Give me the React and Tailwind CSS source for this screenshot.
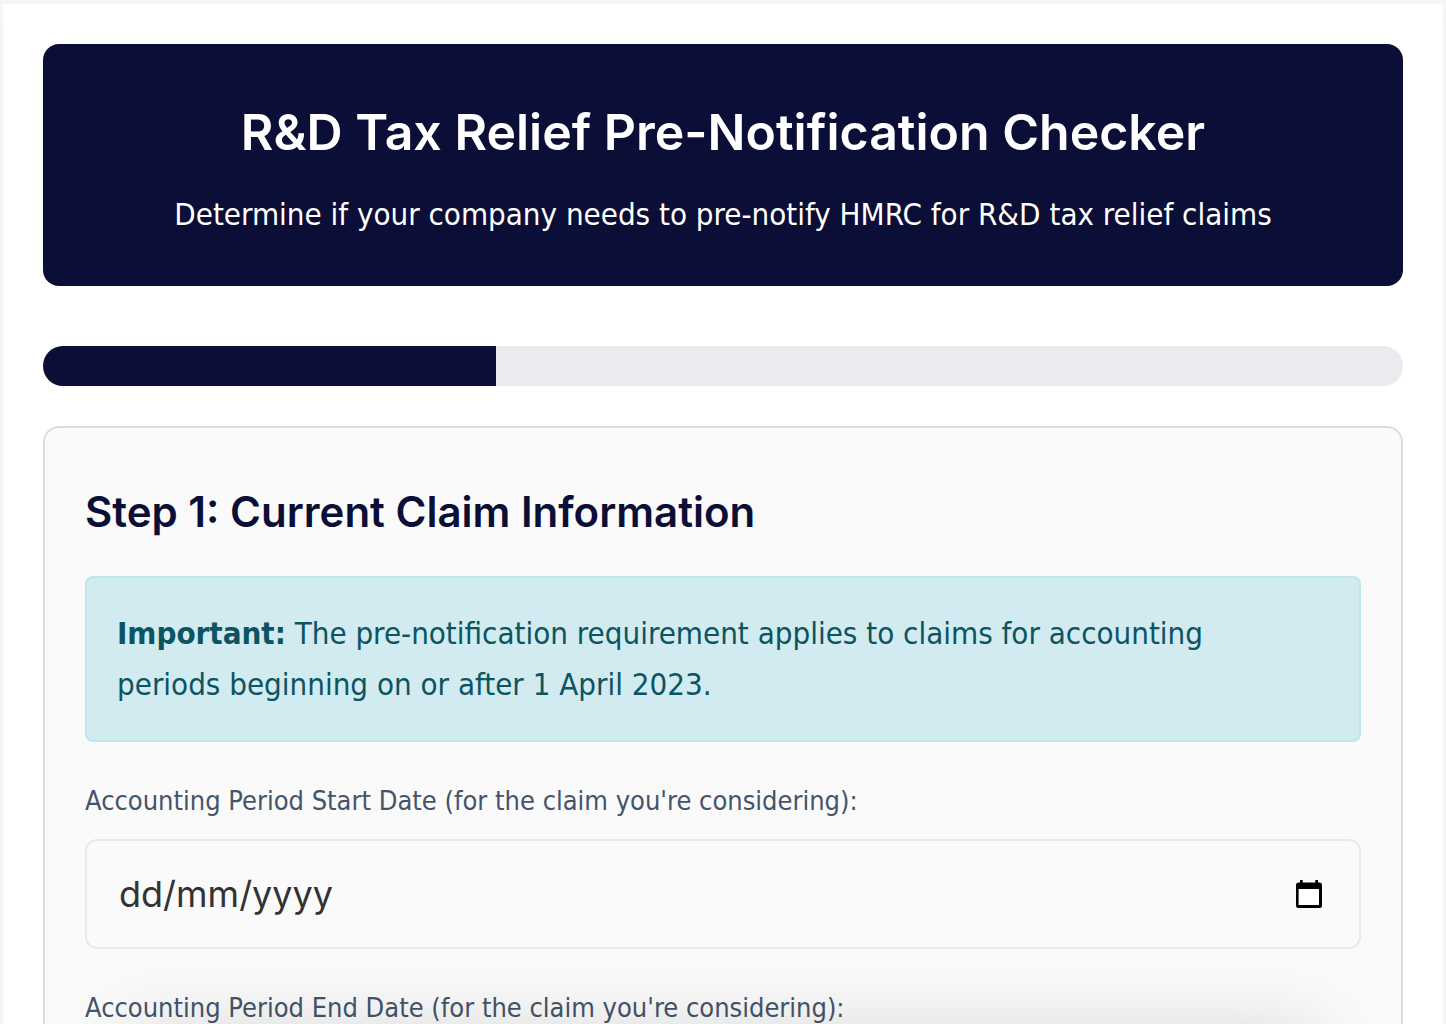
import { useState } from "react"

const STEPS = 3

const dateFields = [
    { id: "period-start", label: "Accounting Period Start Date (for the claim you're considering):" },
    { id: "period-end", label: "Accounting Period End Date (for the claim you're considering):" },
]

const CalendarIcon = () => (
    <svg viewBox="0 0 26 28" className="w-[26px] h-7" aria-hidden="true">
        <path d="M4 0h2.700v2.500h12.600V0H22v2.500h1.500A2.500 2.500 0 0 1 26 5v20.500a2.500 2.500 0 0 1-2.500 2.500h-21A2.500 2.500 0 0 1 0 25.500V5A2.500 2.500 0 0 1 2.500 2.500H4z" fill="#000" />
        <path d="M2.600 9h20.400v16H2.600z" fill="#fff" />
    </svg>
)

const DateField = ({ id, label, value, onChange }) => (
    <div className="mt-9">
        <label htmlFor={id} className="block mb-4 text-[27px] leading-[45px] text-[#44546a]">
            {label}
        </label>
        <div className="flex items-center h-[110px] pl-8 pr-[37px] border-2 border-[#e9e9e9] rounded-xl">
            <input
                id={id}
                type="text"
                placeholder="dd/mm/yyyy"
                value={value}
                onChange={(e) => onChange(id, e.target.value)}
                className="flex-1 min-w-0 bg-transparent outline-none font-['Inter',sans-serif] text-[36px] text-[#333333] placeholder:text-[#333333]"
            />
            <button type="button" aria-label="Choose date">
                <CalendarIcon />
            </button>
        </div>
    </div>
)

export default function App() {
    const [step] = useState(1)
    const [dates, setDates] = useState({ "period-start": "", "period-end": "" })

    const handleDateChange = (id, value) => {
        setDates({ ...dates, [id]: value })
    }

    return (
        <div className="min-h-screen bg-[#f8f8f8] px-[3px] pt-1 font-['DejaVu_Sans_Condensed','Noto_Sans',sans-serif]">
            <main className="bg-white p-10 shadow-[0_0_20px_rgba(0,0,0,0.04)]">
                <header className="px-10 pt-[50px] pb-[46px] rounded-2xl bg-[#0b0e36] text-white text-center">
                    <h1 className="font-['Inter',sans-serif] font-semibold text-[50px] leading-[76px]">
                        R&amp;D Tax Relief Pre-Notification Checker
                    </h1>
                    <p className="mt-[19px] text-[31px] leading-[51px]">
                        Determine if your company needs to pre-notify HMRC for R&amp;D tax relief claims
                    </p>
                </header>

                {/* Progress bar */}
                <div className="mt-[60px] h-10 rounded-full bg-[#eaebef] overflow-hidden">
                    <div className="h-full bg-[#0b0e36]" style={{ width: `${(step / STEPS) * 100}%` }} />
                </div>

                <section className="mt-10 p-10 border-2 border-[#dcdddd] rounded-2xl bg-[#fafafa]">
                    <h2 className="mt-3 font-['Inter',sans-serif] font-semibold text-[42px] leading-[64px] text-[#0b0e36]">
                        Step 1: Current Claim Information
                    </h2>
                    <p className="mt-8 py-[30px] pl-[30px] pr-16 border-2 border-[#bee5eb] rounded-lg bg-[#d1ebf0] text-[31px] leading-[51px] text-[#0c5460]">
                        <strong>Important:</strong> The pre-notification requirement applies to claims for accounting periods
                        beginning on or after 1 April 2023.
                    </p>
                    {dateFields.map((field) => (
                        <DateField key={field.id} {...field} value={dates[field.id]} onChange={handleDateChange} />
                    ))}
                </section>
            </main>

            {/* Shadow rising from the bottom edge of the window */}
            <div className="fixed top-full inset-x-32 h-20 shadow-[0_8px_80px_rgba(0,0,0,0.15)] pointer-events-none" />
        </div>
    )
}
